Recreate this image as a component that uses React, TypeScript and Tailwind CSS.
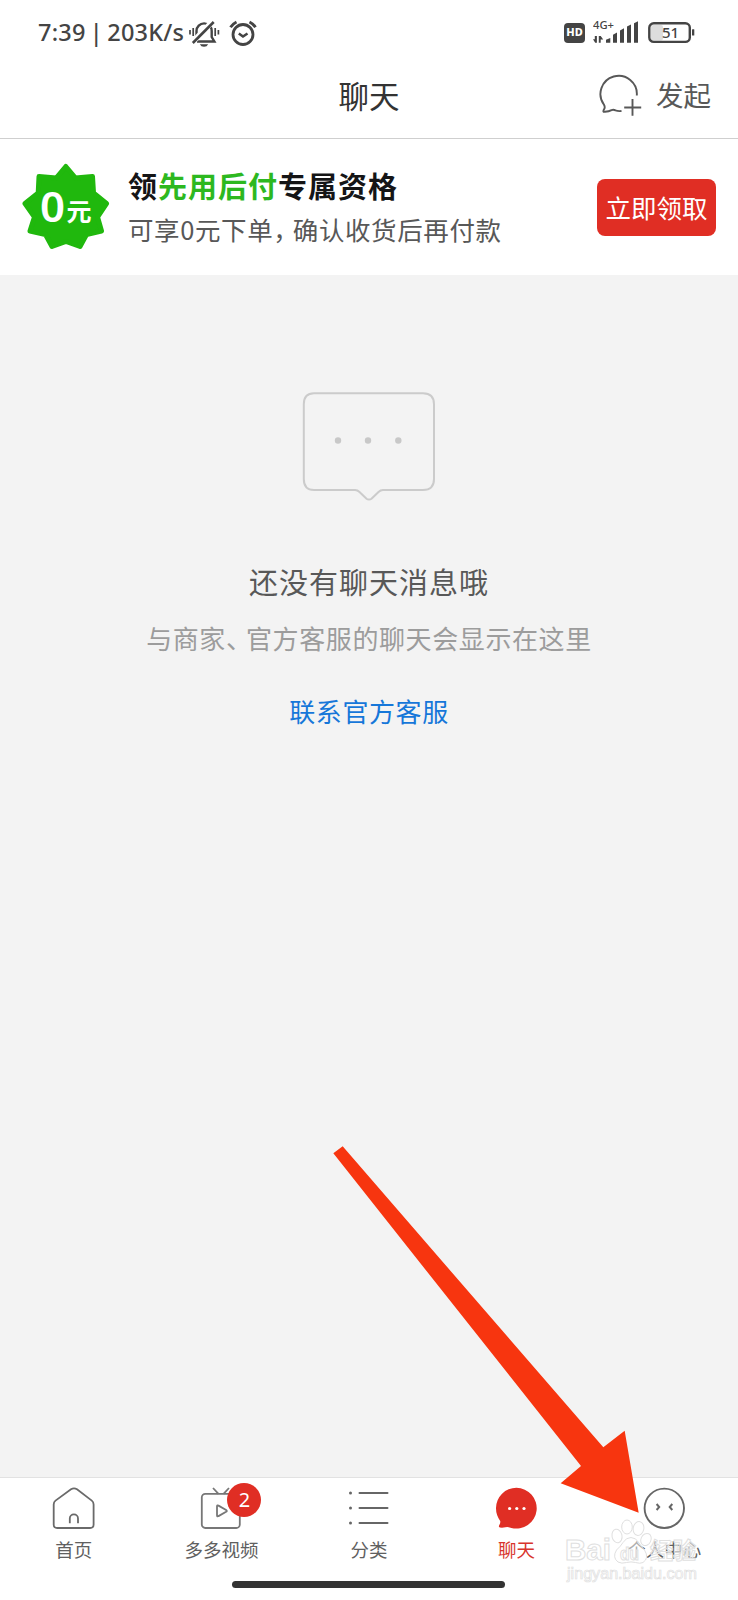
import type { ReactNode } from "react";

const tabs: { label: string; icon: ReactNode; active?: boolean; badge?: number }[] = [
  { label: "首页", icon: <HomeIcon /> },
  { label: "多多视频", icon: <VideoIcon />, badge: 2 },
  { label: "分类", icon: <ListIcon /> },
  { label: "聊天", icon: <ChatIcon />, active: true },
  { label: "个人中心", icon: <ProfileIcon /> },
];

function HomeIcon() {
  return (
    <svg viewBox="0 0 48 48" className="w-12 h-12" fill="none" stroke="#6a6a6a" strokeWidth="1.8">
      <path d="M3.7 20.5Q3.7 18 5.5 16.6L21 5.3Q24 3.3 27 5.3L41.8 16.6Q43.6 18 43.6 20.5V40.5Q43.6 44 40.1 44H7.2Q3.7 44 3.7 40.5Z" />
      <path d="M19.8 39.3V34.5a4.1 4.1 0 0 1 8.2 0V39.3" />
    </svg>
  );
}

function VideoIcon() {
  return (
    <svg viewBox="0 0 48 48" className="w-12 h-12" fill="none" stroke="#777" strokeWidth="1.8">
      <rect x="4.8" y="9.8" width="38" height="34.2" rx="3.5" />
      <path d="M16 4l5.5 5.8M32 4l-5.5 5.8" />
      <path d="M20 22.3v9q0 1.7 1.5.8l7.6-4.3q1.4-.9 0-1.8l-7.6-4.4q-1.5-.9-1.5.7Z" />
    </svg>
  );
}

function ListIcon() {
  return (
    <svg viewBox="0 0 48 48" className="w-12 h-12">
      <g stroke="#666" strokeWidth="2" strokeLinecap="round">
        <path d="M14.5 9H42.5M14.5 24H42.5M14.5 39H42.5" />
      </g>
      <g fill="#666">
        <circle cx="5.5" cy="9" r="1.5" />
        <circle cx="5.5" cy="24" r="1.5" />
        <circle cx="5.5" cy="39" r="1.5" />
      </g>
    </svg>
  );
}

function ChatIcon() {
  return (
    <svg viewBox="0 0 48 48" className="w-12 h-12">
      <path
        d="M24 3.8a20.4 20.4 0 1 1-5 40.2q-3-1.3-6-.7-3 .6-5.5.2-1.7-.6-.7-2.3 1.500-2 1-4.200Q3.500 31 3.600 24A20.400 20.400 0 0 1 24 3.800Z"
        fill="#e02e24"
        transform="translate(-.6 0)"
      />
      <g fill="#fff">
        <circle cx="16.6" cy="24.5" r="1.6" />
        <circle cx="23.8" cy="24.5" r="1.6" />
        <circle cx="31" cy="24.5" r="1.6" />
      </g>
    </svg>
  );
}

function ProfileIcon() {
  return (
    <svg viewBox="0 0 48 48" className="w-12 h-12" fill="none" stroke="#666">
      <circle cx="24.3" cy="24.3" r="19.7" strokeWidth="1.9" />
      <path d="M16.6 20l2.6 3-2.6 3M32.3 20l-2.6 3 2.6 3" strokeWidth="2" />
    </svg>
  );
}

function MutedBellIcon() {
  return (
    <svg viewBox="0 0 32 28" className="w-8 h-7" fill="none" stroke="#444" strokeWidth="2.4">
      <path d="M8.5 21V12a7.6 7.6 0 0 1 15.2 0V18l2.7 4.5H9" />
      <path d="M11.8 25.2h8.4q-1.2 2.6-4.2 2.6t-4.2-2.6Z" fill="#444" stroke="none" />
      <path d="M25.2 1.8L3.8 24" stroke="#fff" strokeWidth="5.5" />
      <path d="M25.7 3L4.8 24" strokeWidth="2.6" />
      <path d="M2 11v4.5M5.2 9v8M27.2 9v8M30.4 11v4.5" strokeWidth="1.7" />
    </svg>
  );
}

function AlarmIcon() {
  return (
    <svg viewBox="0 0 28 28" className="w-7 h-7" fill="none" stroke="#444">
      <circle cx="14" cy="15.5" r="10" strokeWidth="2.8" />
      <path d="M9.8 14.5l4.2 3 4.5-3" strokeWidth="2.6" />
      <path d="M1.5 8.3Q3.5 5 7.5 3M26.5 8.3Q24.5 5 20.5 3" strokeWidth="2.8" />
    </svg>
  );
}

function SignalIcon() {
  return (
    <svg viewBox="0 -6 46 36" className="w-[46px] h-9">
      <text x="0" y="8.3" fontSize="10.5" fontFamily="Noto Sans" fontWeight="500" fill="#444" textLength="21" lengthAdjust="spacingAndGlyphs">
        4G+
      </text>
      <g fill="#444">
        <path d="M3.9 15v6.700H2.200L0 18.200h1.800v-3.200ZM5.800 21.700V15h1.900l2.500 3.500H7.700v3.200Z" />
        <path d="M13 21.700v-3l4.300-1.800v4.800ZM20 21.700v-8l4-2.200v10.200ZM27 21.700V9.500l4-2.200v14.400ZM34 21.700V5.600l4-2.200v18.300ZM41 21.700V2.300l4-2v21.400Z" />
      </g>
    </svg>
  );
}

function BatteryIcon() {
  return (
    <svg viewBox="0 0 48 22" className="w-12 h-[22px]">
      <rect x="3" y="3" width="12" height="15.5" rx="2" fill="#ddd" />
      <rect x="1.3" y="1.3" width="40.5" height="18.6" rx="4.5" fill="none" stroke="#444" strokeWidth="2.4" />
      <rect x="44" y="7.3" width="2.3" height="6.2" rx=".5" fill="#444" />
      <text x="22.5" y="16" textAnchor="middle" fontSize="15" fontFamily="Noto Sans" fontWeight="500" fill="#444">
        51
      </text>
    </svg>
  );
}

function StatusBar() {
  return (
    <div className="flex h-16 items-center justify-between pl-[38px] pr-[42px] pt-px text-[#444]">
      <div className="flex items-center">
        <span className="w-[146px] whitespace-nowrap font-['Noto_Sans'] text-[23.5px] font-medium tracking-[0.2px] [word-spacing:-2px]">
          7:39 | 203K/s
        </span>
        <span className="ml-[4px]">
          <MutedBellIcon />
        </span>
        <span className="ml-[9px]">
          <AlarmIcon />
        </span>
      </div>
      <div className="flex items-center">
        <span className="flex h-5 w-[21px] items-center justify-center rounded-[4px] bg-[#444] font-['Noto_Sans'] text-[11px] font-extrabold text-white">
          HD
        </span>
        <span className="ml-[8px]">
          <SignalIcon />
        </span>
        <span className="ml-[9px]">
          <BatteryIcon />
        </span>
      </div>
    </div>
  );
}

function Header() {
  return (
    <div className="grid h-[75px] grid-cols-3 items-center border-b border-[#cfcfcf] pb-[12px]">
      <span />
      <h1 className="text-center text-[30.5px] leading-none text-[#333]">聊天</h1>
      <div className="flex items-center justify-end pr-[27px]">
        <svg viewBox="0 -1 44 42" className="w-11 h-[42px]" fill="none" stroke="#585858" strokeWidth="1.9">
          <path d="M37.8 20.5A18.2 18.2 0 1 0 5 29.8q1.3 2.5.2 4.3-2 3.2.8 2.7 4-.4 6.5-1.7 2-.8 4 .3 2.5 1 6 .6" />
          <path d="M33.5 24v16.8M25.2 32.5h17" />
        </svg>
        <span className="ml-[13px] text-[27.5px] leading-none text-[#585858]">发起</span>
      </div>
    </div>
  );
}

function Banner() {
  return (
    <div className="flex h-[136px] items-center bg-white px-[22px]">
      <svg viewBox="0 -1 88 88" className="h-[88px] w-[88px] shrink-0">
        <path
          d="M43.8 2.5L53.5 14L70.5 12.5L71.5 29L84.5 39.5L75.5 53L79.5 67L64.5 70.5L58 82.5L44 77.5L30 82.5L23.5 70.5L8 67L12.5 53L3 39.5L16.2 29L17 12.5L34.2 14Z"
          fill="#20b80d"
          stroke="#20b80d"
          strokeWidth="5"
          strokeLinejoin="round"
        />
        <text x="18" y="57.5" fontSize="41" fontFamily="Noto Sans" fontWeight="600" fill="#fff" textLength="25" lengthAdjust="spacingAndGlyphs">
          0
        </text>
        <text x="44.5" y="56.5" fontSize="25" fontFamily="Noto Sans CJK SC" fontWeight="700" fill="#fff">
          元
        </text>
      </svg>
      <div className="ml-[18px] flex-1 whitespace-nowrap">
        <p className="text-[29px] font-bold leading-[44px] tracking-[1px] text-[#151516]">
          领<span className="text-[#2db81f]">先用后付</span>专属资格
        </p>
        <p className="text-[25.5px] leading-[44px] tracking-[0.6px] text-[#585858]">
          可享0元下单<span className="tracking-[-6px]">，</span>确认收货后再付款
        </p>
      </div>
      <button className="h-[57px] w-[119px] rounded-lg bg-[#e02e24] text-[25.5px] text-white">立即领取</button>
    </div>
  );
}

function EmptyState() {
  return (
    <div className="flex flex-1 flex-col items-center bg-[#f3f3f3] pt-[115px]">
      <svg viewBox="0 0 136 114" className="w-[136px] h-[114px]">
        <path
          d="M13 3.3H122Q133 3.3 133 14.3V89Q133 100 122 100H82Q79.5 100 77.5 102L70.5 108.7Q68 110.5 65.5 108.7L58.5 102Q56.5 100 54 100H13Q2.8 100 2.8 89V14.3Q2.8 3.3 13 3.3Z"
          fill="none"
          stroke="#cbcbcb"
          strokeWidth="2"
        />
        <g fill="#c8c8c8">
          <circle cx="37" cy="50.5" r="3.2" />
          <circle cx="67" cy="50.5" r="3.2" />
          <circle cx="97.3" cy="50.5" r="3.2" />
        </g>
      </svg>
      <p className="mt-[55px] text-[29px] leading-[44px] tracking-[1px] text-[#585858]">还没有聊天消息哦</p>
      <p className="mt-[15px] text-[26px] leading-[40px] tracking-[0.6px] text-[#9c9c9c]">
        与商家<span className="tracking-[-6px]">、</span>官方客服的聊天会显示在这里
      </p>
      <a className="mt-[33px] text-[26px] leading-[40px] tracking-[0.6px] text-[#1677d9]">联系官方客服</a>
    </div>
  );
}

function TabBar() {
  return (
    <div className="h-[123px] border-t border-[#e2e2e2] bg-white">
      <div className="grid h-[103px] grid-cols-5">
        {tabs.map((tab) => (
          <div key={tab.label} className="flex flex-col items-center pt-[6px]">
            <div className="relative">
              {tab.icon}
              {tab.badge && (
                <span className="absolute left-[30px] top-[-1px] flex h-[34px] w-[34px] items-center justify-center rounded-full bg-[#e02e24] font-['Noto_Sans'] text-[20px] text-white">
                  {tab.badge}
                </span>
              )}
            </div>
            <span className={`mt-[4px] text-[18.5px] leading-[26px] ${tab.active ? "text-[#d8342c]" : "text-[#606060]"}`}>
              {tab.label}
            </span>
          </div>
        ))}
      </div>
      <div className="ml-[232px] h-[7px] w-[273px] rounded-full bg-[#333]" />
    </div>
  );
}

function Watermark() {
  return (
    <svg viewBox="0 0 145 70" className="pointer-events-none absolute left-[560px] top-[1515px] h-[70px] w-[145px]">
      <g fill="#fff" fillOpacity=".5" stroke="#e0e0e0" strokeWidth="1">
        <ellipse cx="57" cy="21" rx="5" ry="6.8" transform="rotate(-12 57 21)" />
        <ellipse cx="67" cy="12" rx="5.3" ry="7" />
        <ellipse cx="78.5" cy="13.5" rx="5.3" ry="7" transform="rotate(12 78.5 13.5)" />
        <ellipse cx="86" cy="24.5" rx="5" ry="6.3" transform="rotate(25 86 24.5)" />
        <path d="M71 22.500q5 0 8 5.500 2.500 4 5.500 7 5 8-1.500 12.500-3 1.500-7.500 0-4.500-1.200-9 0-5 1.500-8.500-.5-6-4.500-1.500-12 4-3.500 6.500-7.500 3-5 8-5Z" />
        <text x="5" y="45" fontFamily="Liberation Sans" fontSize="29" fontWeight="700" textLength="46" lengthAdjust="spacingAndGlyphs">
          Bai
        </text>
        <text x="60" y="45" fontFamily="Liberation Sans" fontSize="18" fontWeight="700" textLength="19" lengthAdjust="spacingAndGlyphs">
          du
        </text>
        <text x="90" y="44" fontFamily="Noto Sans CJK SC" fontSize="23" fontWeight="700">
          经验
        </text>
        <text x="7" y="63.5" fontFamily="Liberation Sans" fontSize="16" strokeWidth=".7" textLength="130" lengthAdjust="spacingAndGlyphs">
          jingyan.baidu.com
        </text>
      </g>
    </svg>
  );
}

export default function App() {
  return (
    <div className="relative flex h-[1600px] w-[738px] flex-col overflow-hidden bg-white font-['Noto_Sans_CJK_SC',sans-serif]">
      <StatusBar />
      <Header />
      <Banner />
      <EmptyState />
      <TabBar />
      <Watermark />
      <svg viewBox="0 0 1020 1200" className="pointer-events-none absolute left-[320px] top-[1130px] h-[400px] w-[340px]">
        <path d="M40 70L68 49L850 952L914 902L956 1148L722 1060L783 1008Z" fill="#f7350f" />
      </svg>
    </div>
  );
}
